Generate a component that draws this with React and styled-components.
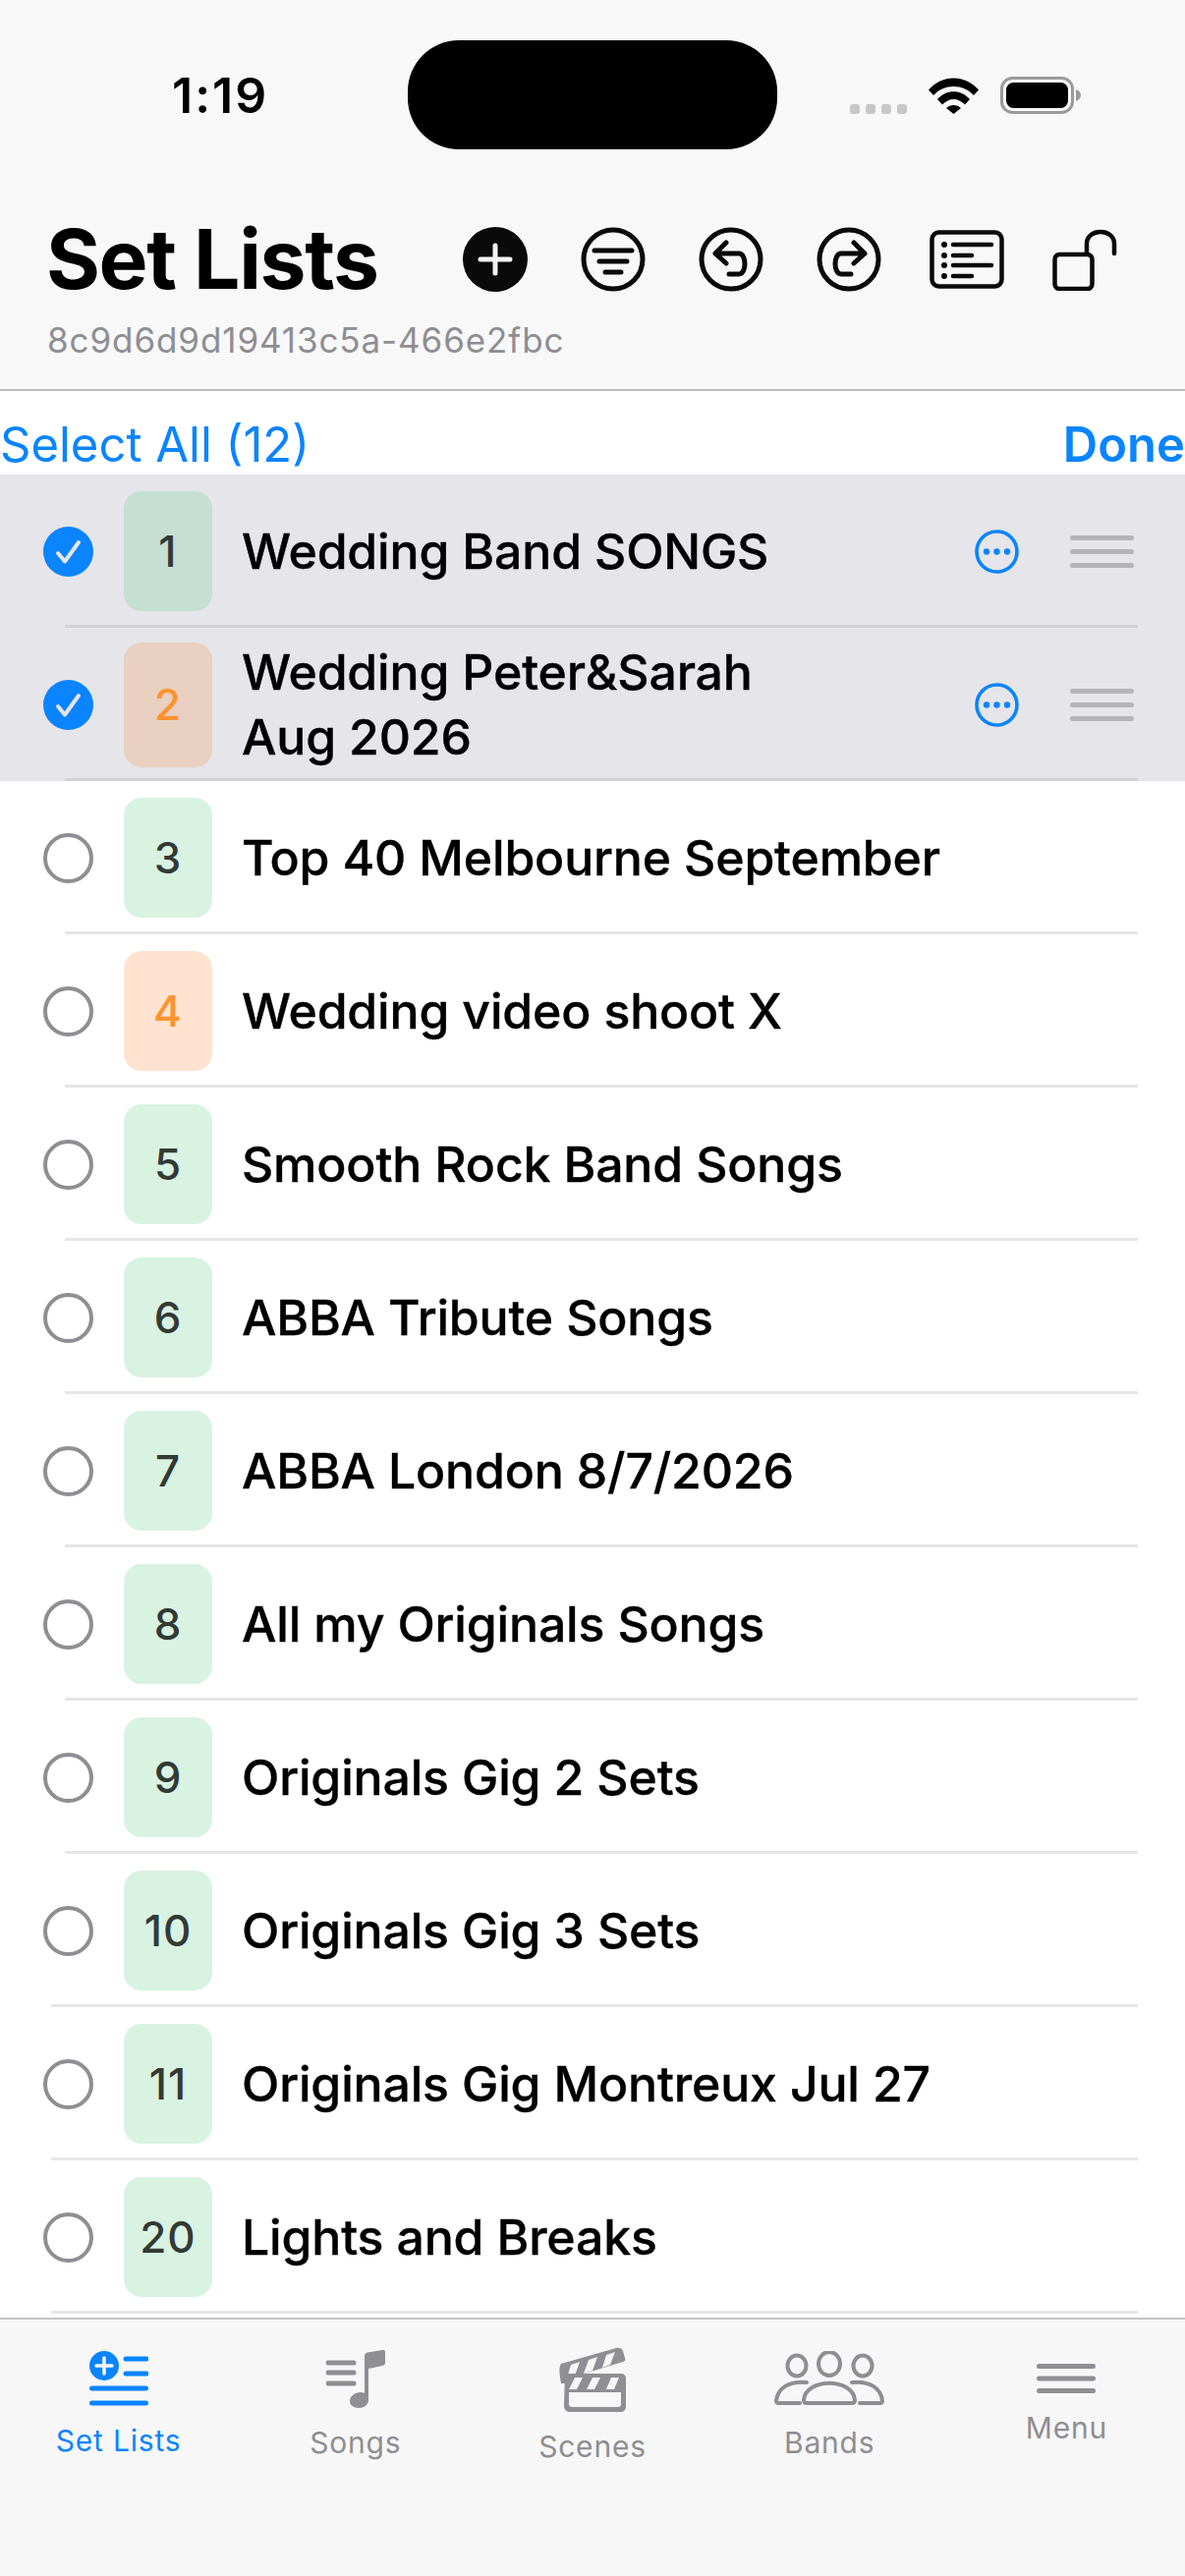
import styled, { createGlobalStyle } from "styled-components";

const BLUE = "#0a84ff";
const GRAY = "#8e8e93";

const Global = createGlobalStyle`
  html, body {
    margin: 0;
    padding: 0;
    background: #fff;
  }
  * {
    box-sizing: border-box;
  }
`;

const Page = styled.div`
  width: 1206px;
  height: 2622px;
  display: flex;
  flex-direction: column;
  overflow: hidden;
  background: #fff;
  font-family: Inter, "Liberation Sans", sans-serif;
  color: #000;
`;

const Header = styled.header`
  height: 398px;
  background: #f8f8f8;
  border-bottom: 2px solid #bcbcbc;
  flex: none;
`;

const StatusBar = styled.div`
  height: 152px;
  padding-top: 41px;
  display: grid;
  grid-template-columns: 415px 376px 1fr;
`;

const Clock = styled.div`
  padding: 30px 0 0 175px;
  font-size: 50px;
  line-height: 52px;
  font-weight: 600;
  letter-spacing: 2px;
`;

const Island = styled.div`
  background: #000;
  border-radius: 52px;
`;

const StatusIcons = styled.div`
  display: flex;
  align-items: flex-end;
  height: 75px;
  padding-left: 74px;
`;

const SignalDots = styled.div`
  display: flex;
  gap: 6px;
  margin-right: 22px;
`;

const SignalDot = styled.span`
  width: 10px;
  height: 10px;
  border-radius: 3px;
  background: #c7c7c7;
`;

const TitleRow = styled.div`
  display: flex;
  align-items: center;
  height: 66px;
  margin-top: 79px;
  padding-left: 47px;
`;

const Title = styled.h1`
  margin: 0;
  width: 424px;
  font-size: 84px;
  line-height: 66px;
  font-weight: 700;
  letter-spacing: -1.4px;
`;

const Tools = styled.div`
  display: grid;
  grid-template-columns: repeat(6, 66px);
  column-gap: 54px;
  align-items: center;
  justify-items: center;
`;

const Subtitle = styled.div`
  margin-top: 29px;
  padding-left: 48px;
  font-size: 35px;
  line-height: 40px;
  color: ${GRAY};
  letter-spacing: 0.9px;
`;

const SelectBar = styled.div`
  flex: none;
  height: 85px;
  padding: 28px 0 0 0;
  display: flex;
  justify-content: space-between;
  font-size: 49px;
  line-height: 54px;
  color: ${BLUE};
  white-space: nowrap;
`;

const DoneLabel = styled.span`
  font-weight: 600;
`;

const List = styled.div`
  flex: 1;
  overflow: hidden;
`;

const Row = styled.div`
  position: relative;
  height: 156px;
  display: flex;
  align-items: center;
  padding-left: 44px;
  background: ${(p) => (p.$selected ? "#e5e5ea" : "#fff")};

  &::after {
    content: "";
    position: absolute;
    left: ${(p) => p.$inset}px;
    right: 48px;
    bottom: 0;
    height: 3px;
    background: ${(p) => (p.$selected ? "#d1d1d6" : "#e6e6e6")};
  }
`;

const Badge = styled.div`
  flex: none;
  width: 90px;
  height: ${(p) => (p.$tall ? 127 : 122)}px;
  margin: 0 30px 0 31px;
  display: flex;
  align-items: center;
  justify-content: center;
  border-radius: 18px;
  font-size: 44px;
  font-weight: 500;
  letter-spacing: 1px;
  background: ${(p) => p.$bg};
  color: ${(p) => p.$fg};
`;

const Name = styled.div`
  flex: 1;
  font-size: 50px;
  line-height: 66px;
  font-weight: 500;
  letter-spacing: -0.18px;
  -webkit-text-stroke: 0.35px #000;
  white-space: pre-line;
`;

const RowActions = styled.div`
  flex: none;
  display: flex;
  align-items: center;
  gap: 52px;
  padding-right: 52px;
`;

const Handle = styled.div`
  width: 65px;
  display: flex;
  flex-direction: column;
  gap: 9px;
`;

const HandleLine = styled.span`
  height: 5px;
  border-radius: 3px;
  background: #b4b4b8;
`;

const TabBar = styled.nav`
  flex: none;
  height: 263px;
  background: #f7f7f7;
  border-top: 2px solid #c4c4c4;
  display: grid;
  grid-template-columns: repeat(5, 1fr);
`;

const Tab = styled.div`
  display: flex;
  flex-direction: column;
  align-items: center;
  gap: 17px;
  padding-top: ${(p) => p.$top}px;
  color: ${(p) => (p.$active ? BLUE : GRAY)};
`;

const TabLabel = styled.span`
  font-size: 30px;
  line-height: 36px;
  letter-spacing: 0.8px;
`;

const Check = () => (
  <svg width="51" height="51" viewBox="0 0 51 51" style={{ flex: "none" }}>
    <circle cx="25.5" cy="25.5" r="25.5" fill={BLUE} />
    <path d="M15 27l7 8.500L36 16" fill="none" stroke="#e5e5ea" strokeWidth="4" strokeLinecap="round" strokeLinejoin="round" />
  </svg>
);

const Radio = () => (
  <svg width="51" height="51" viewBox="0 0 51 51" style={{ flex: "none" }}>
    <circle cx="25.5" cy="25.5" r="23.5" fill="none" stroke={GRAY} strokeWidth="4" />
  </svg>
);

const More = () => (
  <svg width="45" height="45" viewBox="0 0 45 45">
    <circle cx="22.5" cy="22.5" r="20.5" fill="none" stroke={BLUE} strokeWidth="3.6" />
    <circle cx="12" cy="22.5" r="3.2" fill={BLUE} />
    <circle cx="22.5" cy="22.5" r="3.2" fill={BLUE} />
    <circle cx="33" cy="22.5" r="3.2" fill={BLUE} />
  </svg>
);

const Wifi = () => (
  <svg width="51" height="38" viewBox="0 0 51 38" style={{ marginRight: 22 }}>
    <path d="M0 13.5C14-2.5 37-2.5 51 13.5L46 19C35 7 16 7 5 19Z" />
    <path d="M9 23C18 12.5 33 12.5 42 23L37 28.5C30 21 21 21 14 28.5Z" />
    <path d="M18 32C22.500 28 28.500 28 33 32L25.500 38Z" />
  </svg>
);

const Battery = () => (
  <svg width="82" height="38" viewBox="0 0 82 38">
    <rect x="1.500" y="1.500" width="72" height="35" rx="11" fill="none" stroke="#9a9a9a" strokeWidth="3" />
    <rect x="6" y="6" width="63" height="26" rx="7.500" />
    <path d="M77 13c3 1 5 3 5 6s-2 5-5 6Z" fill="#9a9a9a" />
  </svg>
);

const Ring = ({ children }) => (
  <svg width="66" height="66" viewBox="0 0 66 66" fill="none" stroke="#0a0a0a" strokeWidth="5" strokeLinecap="round" strokeLinejoin="round">
    <circle cx="33" cy="33" r="30" />
    {children}
  </svg>
);

const AddIcon = () => (
  <svg width="66" height="66" viewBox="0 0 66 66">
    <circle cx="33" cy="33" r="33" fill="#0a0a0a" />
    <path d="M33 19v28M18 33h30" stroke="#f2f2f2" strokeWidth="5" strokeLinecap="round" />
  </svg>
);

const FilterIcon = () => (
  <Ring>
    <path d="M14 24h38M19 35h28M25 46h16" />
  </Ring>
);

const UndoIcon = () => (
  <Ring>
    <path d="M28 16l-11 11 11 10M17 27h24c8 0 8 21 0 21H31" />
  </Ring>
);

const RedoIcon = () => (
  <Ring>
    <path d="M38 16l11 11-11 10M49 27H25c-8 0-8 21 0 21h10" />
  </Ring>
);

const ListIcon = () => (
  <svg width="76" height="60" viewBox="0 0 76 60" fill="none" stroke="#0a0a0a" strokeWidth="4.500" strokeLinecap="round">
    <rect x="2.500" y="2.500" width="71" height="55" rx="7" />
    <path d="M24 15h39M24 26h19M24 36h39M24 47h19" />
    <g fill="#0a0a0a" stroke="none">
      <circle cx="15" cy="15" r="3" />
      <circle cx="15" cy="26" r="3" />
      <circle cx="15" cy="36" r="3" />
      <circle cx="15" cy="47" r="3" />
    </g>
  </svg>
);

const LockIcon = () => (
  <svg width="66" height="63" viewBox="0 0 66 63" fill="none" stroke="#0a0a0a" strokeWidth="4.500" strokeLinecap="round">
    <rect x="2.500" y="26" width="38" height="35" rx="5" />
    <path d="M35 25V15C35 -1 63 -1 63 15V25" />
  </svg>
);

const SetListsTab = () => (
  <svg width="60" height="56" viewBox="0 0 60 56">
    <circle cx="15" cy="15" r="15" fill={BLUE} />
    <path d="M15 7v16M7 15h16" stroke="#f7f7f7" strokeWidth="3.500" strokeLinecap="round" />
    <path d="M37 8h21M37 23h21M2.500 38h55M2.500 53h55" stroke={BLUE} strokeWidth="5" strokeLinecap="round" />
  </svg>
);

const SongsTab = () => (
  <svg width="60" height="59" viewBox="0 0 60 59">
    <path d="M2 13h26M2 23h26M2 34h26" stroke={GRAY} strokeWidth="5" strokeLinecap="round" />
    <path d="M39 6c0-2 1-3 3-3.500L57 0c2-.3 3 .5 3 2v11c0 2-1 2.500-3 3l-14 3v32c0 5-5 8-10 8-5 0-9-3-9-7 0-5 5-9 11-9 1 0 3 0 4 1Z" fill={GRAY} />
  </svg>
);

const ScenesTab = () => (
  <svg width="68" height="66" viewBox="0 0 68 66">
    <path d="M2 17L58 1c4-1 6 1 7 3l2 7c1 2 0 3-2 4L9 32l3 5H2c-1-7-3-15 0-20Z" fill={GRAY} />
    <path d="M12 18l9-3-5 14-8 2ZM30 13l9-3-5 14-9 3ZM48 8l9-3-5 13-8 3Z" fill="#f7f7f7" />
    <path d="M6 27h57c3 0 5 2 5 5v28c0 4-2 6-6 6H11c-3 0-6-2-6-6Z" fill={GRAY} />
    <path d="M16 31h8l-6 12h-8ZM34 31h8l-6 12h-8ZM53 31h8l-5 12h-8Z" fill="#f7f7f7" />
    <path d="M10 46h53v12c0 2-1 3-3 3H13c-2 0-3-1-3-3Z" fill="#f7f7f7" />
  </svg>
);

const BandsTab = () => (
  <svg width="112" height="58" viewBox="0 0 112 58" fill="none" stroke={GRAY} strokeWidth="4" strokeLinecap="round" strokeLinejoin="round">
    <ellipse cx="23" cy="15" rx="9.500" ry="10.500" />
    <ellipse cx="56" cy="13" rx="11" ry="12" />
    <ellipse cx="90" cy="15" rx="9.500" ry="10.500" />
    <path d="M33 32C15 30 3 38 2 51c0 1 1 2 2 2h22" />
    <path d="M33 53c-2 0-3-1-3-3C32 27 80 27 82 50c0 2-1 3-3 3Z" />
    <path d="M79 32c18-2 30 6 31 19 0 1-1 2-2 2H87" />
  </svg>
);

const MenuTab = () => (
  <svg width="60" height="30" viewBox="0 0 60 30">
    <path d="M2.500 2.500h55M2.500 15h55M2.500 27.500h55" stroke={GRAY} strokeWidth="5" strokeLinecap="round" />
  </svg>
);

const songs = [
  { num: "1", name: "Wedding Band SONGS", selected: true },
  { num: "2", name: "Wedding Peter&Sarah\nAug 2026", selected: true, orange: true, tall: true },
  { num: "3", name: "Top 40 Melbourne September" },
  { num: "4", name: "Wedding video shoot X", orange: true },
  { num: "5", name: "Smooth Rock Band Songs" },
  { num: "6", name: "ABBA Tribute Songs" },
  { num: "7", name: "ABBA London 8/7/2026" },
  { num: "8", name: "All my Originals Songs" },
  { num: "9", name: "Originals Gig 2 Sets" },
  { num: "10", name: "Originals Gig 3 Sets", inset: 52 },
  { num: "11", name: "Originals Gig Montreux Jul 27", inset: 52 },
  { num: "20", name: "Lights and Breaks", inset: 52 },
];

function badgeColor(song) {
  if (song.selected) return song.orange ? "#e9d0c0" : "#c5dfd2";
  return song.orange ? "#ffe3d0" : "#d9f3e3";
}

const tabs = [
  { label: "Set Lists", icon: <SetListsTab />, top: 32, active: true },
  { label: "Songs", icon: <SongsTab />, top: 31 },
  { label: "Scenes", icon: <ScenesTab />, top: 28 },
  { label: "Bands", icon: <BandsTab />, top: 32 },
  { label: "Menu", icon: <MenuTab />, top: 45 },
];

export default function App() {
  return (
    <Page>
      <Global />
      <Header>
        <StatusBar>
          <Clock>1:19</Clock>
          <Island />
          <StatusIcons>
            <SignalDots>
              <SignalDot />
              <SignalDot />
              <SignalDot />
              <SignalDot />
            </SignalDots>
            <Wifi />
            <Battery />
          </StatusIcons>
        </StatusBar>
        <TitleRow>
          <Title>Set Lists</Title>
          <Tools>
            <AddIcon />
            <FilterIcon />
            <UndoIcon />
            <RedoIcon />
            <ListIcon />
            <LockIcon />
          </Tools>
        </TitleRow>
        <Subtitle>8c9d6d9d19413c5a-466e2fbc</Subtitle>
      </Header>
      <SelectBar>
        <span>Select All (12)</span>
        <DoneLabel>Done</DoneLabel>
      </SelectBar>
      <List>
        {songs.map((song) => (
          <Row key={song.num} $selected={song.selected} $inset={song.inset || 66}>
            {song.selected ? <Check /> : <Radio />}
            <Badge $bg={badgeColor(song)} $fg={song.orange ? "#ff9230" : "#333a35"} $tall={song.tall}>
              {song.num}
            </Badge>
            <Name>{song.name}</Name>
            {song.selected && (
              <RowActions>
                <More />
                <Handle>
                  <HandleLine />
                  <HandleLine />
                  <HandleLine />
                </Handle>
              </RowActions>
            )}
          </Row>
        ))}
      </List>
      <TabBar>
        {tabs.map((tab) => (
          <Tab key={tab.label} $top={tab.top} $active={tab.active}>
            {tab.icon}
            <TabLabel>{tab.label}</TabLabel>
          </Tab>
        ))}
      </TabBar>
    </Page>
  );
}
